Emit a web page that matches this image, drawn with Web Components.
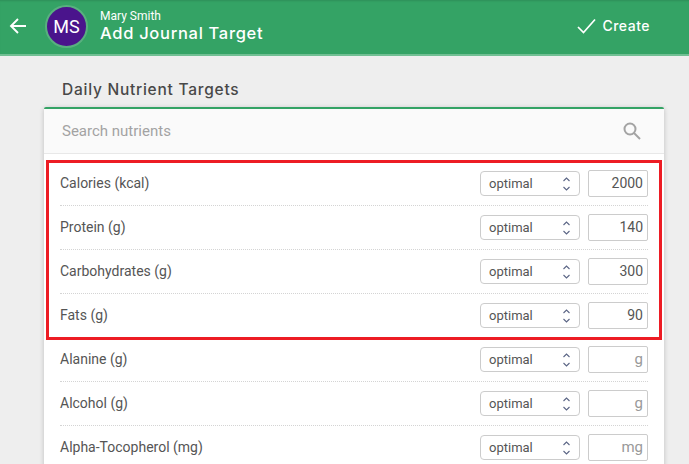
<!DOCTYPE html>
<html>
<head>
<meta charset="utf-8">
<title>Add Journal Target</title>
<style>
html,body{margin:0;padding:0;height:100%;overflow:hidden;background:#eee;font-family:Roboto,sans-serif;}
</style>
</head>
<body>
<app-bar name="Mary Smith" title="Add Journal Target" initials="MS"></app-bar>
<target-page heading="Daily Nutrient Targets">
  <highlight-box>
    <nutrient-row label="Calories (kcal)" value="2000"></nutrient-row>
    <nutrient-row label="Protein (g)" value="140"></nutrient-row>
    <nutrient-row label="Carbohydrates (g)" value="300"></nutrient-row>
    <nutrient-row label="Fats (g)" value="90"></nutrient-row>
  </highlight-box>
  <nutrient-row label="Alanine (g)" unit="g"></nutrient-row>
  <nutrient-row label="Alcohol (g)" unit="g"></nutrient-row>
  <nutrient-row label="Alpha-Tocopherol (mg)" unit="mg"></nutrient-row>
</target-page>
<script>
/* top green bar */
class AppBar extends HTMLElement {
  constructor(){
    super();
    this.attachShadow({mode:'open'});
    this.shadowRoot.innerHTML=`
      <style>
        :host{ display:flex; align-items:center; box-sizing:border-box; height:56px; padding-bottom:2px; background:#34a365; border-bottom:2px solid #71bf93; color:#fff; box-shadow:inset 0 2px 2px -1px rgba(0,0,0,.12); }
        .back{ width:18px; height:18px; margin-left:9px; display:block; }
        .avatar{ width:39px; height:39px; margin-left:18px; border-radius:50%; background:#4a148c; border:2px solid #58b07f; display:flex; align-items:center; justify-content:center; font:400 18px Roboto,sans-serif; }
        .titles{ margin-left:12px; flex:1; }
        .name{ font:400 12px/14px Roboto,sans-serif; }
        .title{ font:500 16.5px/20px Inter,sans-serif; letter-spacing:.7px; }
        .create{ display:flex; align-items:center; margin-right:39px; font:500 14px Inter,sans-serif; letter-spacing:.5px; }
        .create span{ margin-bottom:2px; }
        .create svg{ width:19px; height:16px; margin-right:6px; display:block; }
      </style>
      <svg class="back" viewBox="0 0 18 18" fill="none" stroke="#fff" stroke-width="1.9"><path d="M17 9H2M9 2L2 9l7 7"/></svg>
      <div class="avatar">${this.getAttribute('initials')}</div>
      <div class="titles">
        <div class="name">${this.getAttribute('name')}</div>
        <div class="title">${this.getAttribute('title')}</div>
      </div>
      <div class="create">
        <svg viewBox="0 0 19 16" fill="none" stroke="#fff" stroke-width="1.7"><path d="M1 9l5.500 5.500L18 1.500"/></svg>
        <span>Create</span>
      </div>
    `;
  }
}
customElements.define('app-bar',AppBar);

/* heading + card with the search row */
class TargetPage extends HTMLElement {
  constructor(){
    super();
    this.attachShadow({mode:'open'});
    this.shadowRoot.innerHTML=`
      <style>
        :host{ display:block; padding:0 25px 0 44px; }
        h2{ margin:0; padding:24px 0 0 18px; height:27px; font:500 15.5px/19px Inter,sans-serif; letter-spacing:.75px; color:#484848; }
        .card{ background:#fff; border-top:2px solid #34a365; box-shadow:0 1px 5px rgba(0,0,0,.2); border-radius:2px 2px 0 0; }
        .search{ display:flex; align-items:center; justify-content:space-between; height:44px; padding:0 23px 0 18px; background:#fafafa; border-bottom:1px solid #e8e8e8; color:#a3a3a3; font:400 15px Roboto,sans-serif; }
        .search svg{ width:18px; height:18px; display:block; }
        .rows{ padding-top:8px; }
      </style>
      <h2>${this.getAttribute('heading')}</h2>
      <div class="card">
        <div class="search">
          <span>Search nutrients</span>
          <svg viewBox="0 0 18 18" fill="none" stroke="#a3a3a3" stroke-width="2"><circle cx="7" cy="7" r="5.500"/><path d="M11 11l6 6"/></svg>
        </div>
        <div class="rows"><slot></slot></div>
      </div>
    `;
  }
}
customElements.define('target-page',TargetPage);

/* red annotation round the first rows */
class HighlightBox extends HTMLElement {
  constructor(){
    super();
    this.attachShadow({mode:'open'});
    this.shadowRoot.innerHTML=`
      <style>
        :host{ display:block; position:relative; }
        .mark{ position:absolute; left:2px; right:2px; top:-2px; height:174px; border:3px solid #ed1c24; pointer-events:none; }
      </style>
      <slot></slot>
      <div class="mark"></div>
    `;
  }
}
customElements.define('highlight-box',HighlightBox);

/* one nutrient line */
class NutrientRow extends HTMLElement {
  constructor(){
    super();
    this.attachShadow({mode:'open'});
    const value=this.getAttribute('value');
    const unit=this.getAttribute('unit');
    this.shadowRoot.innerHTML=`
      <style>
        :host{ display:block; padding:0 16px; }
        .row{ display:flex; align-items:center; height:43px; border-bottom:1px dotted #d4d4d4; color:#555; font:400 14px Roboto,sans-serif; }
        .label{ flex:1; padding-bottom:1px; }
        .select{ box-sizing:border-box; width:100px; height:25px; margin-right:8px; padding:0 9px 0 8px; display:flex; align-items:center; justify-content:space-between; border:1px solid #ccc; border-radius:4px; font-size:13px; }
        .select svg{ width:7px; height:14px; display:block; }
        .input{ box-sizing:border-box; width:60px; height:27px; padding:0 4px; border:1px solid #ccc; border-radius:2px; text-align:right; line-height:25px; font-size:14px; }
        .unit{ color:#999; font-size:15px; }
      </style>
      <div class="row">
        <div class="label">${this.getAttribute('label')}</div>
        <div class="select">
          <span>optimal</span>
          <svg viewBox="0 0 7 14" fill="none" stroke="#5b6585" stroke-width="1.100"><path d="M.5 4L3.500 1l3 3M.5 10l3 3 3-3"/></svg>
        </div>
        <div class="input">${value?value:`<span class="unit">${unit}</span>`}</div>
      </div>
    `;
  }
}
customElements.define('nutrient-row',NutrientRow);
</script>
</body>
</html>
